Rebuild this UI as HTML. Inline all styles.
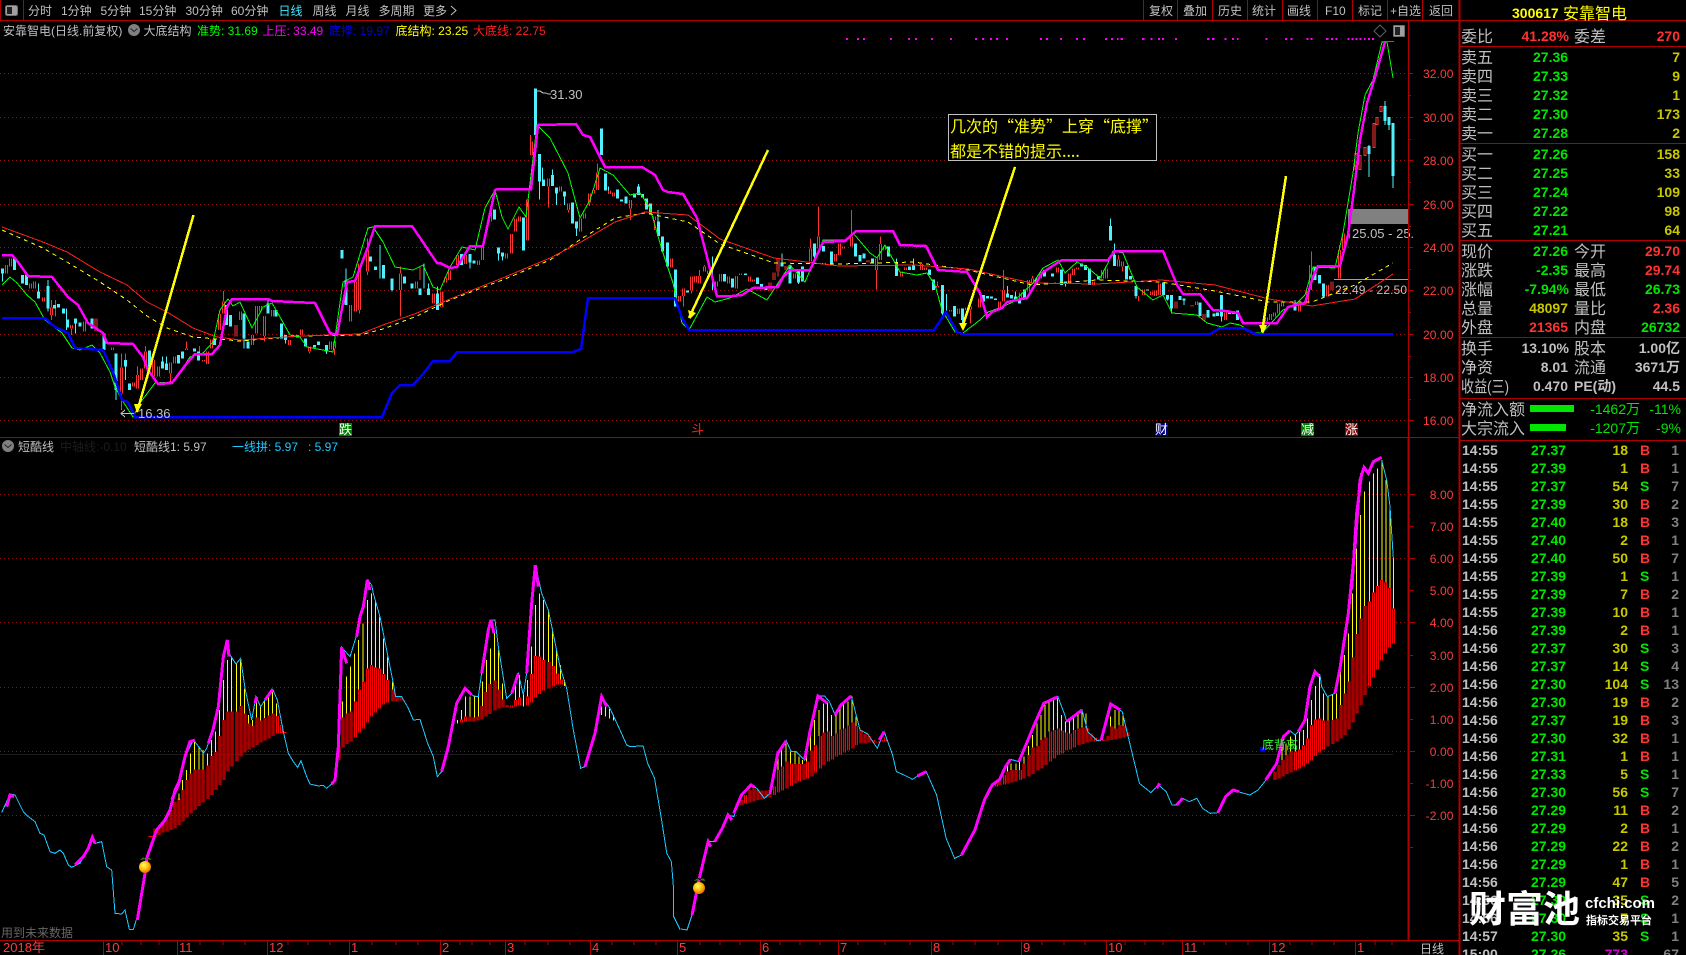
<!DOCTYPE html>
<html><head><meta charset="utf-8"><title>安靠智电</title>
<style>
html,body{margin:0;padding:0;background:#000;width:1686px;height:955px;overflow:hidden}
svg{display:block;position:absolute;left:0;top:0}
text{font-family:"Liberation Sans","WenQuanYi Zen Hei","Noto Sans CJK SC",sans-serif;font-size:12px;fill:#c0c0c0}
path,polyline,line{vector-effect:non-scaling-stroke;fill:none}
.cr{shape-rendering:crispEdges}
.l{font-size:16px}
.n{font-size:14px;font-weight:bold}
.e{text-anchor:end}
.a{font-size:12px;fill:#ff3c3c;text-anchor:end;letter-spacing:.1px}
.G{fill:#00e600}.Y{fill:#c8c800}.R{fill:#ff3232}.D{fill:#808080}.M{fill:#d000d0}
.note{font-family:"WenQuanYi Zen Hei","Noto Sans CJK SC",sans-serif;font-size:16px;fill:#ffff00}
</style></head><body>
<svg width="1686" height="955" viewBox="0 0 1686 955" xmlns="http://www.w3.org/2000/svg">
<defs>
<radialGradient id="fr" cx=".4" cy=".35" r=".7"><stop offset="0" stop-color="#ffff60"/><stop offset=".6" stop-color="#ffb000"/><stop offset="1" stop-color="#d86000"/></radialGradient>
<path id="r7" d="M20 135V160M32 115V140M92 190V205M104 185V205M130 232V245M154 262V285M214 315V325M254 305V335M288 295V335M338 383V390M364 442V520M400 487V500M412 465V505M424 445V480M436 395V445M460 420V470M476 440V470M512 428V460M524 410V430M560 385V390M610 420V425M622 395V432M634 358V385M658 282V330M670 245V280M708 315V350M722 275V300M758 345V375M770 258V340M782 258V275M794 288V348M818 270V290M868 360V375M904 328V345M928 380V395M992 365V388M1004 365V385M1052 255V305M1066 185V275M1078 130V270M1102 90V155M1202 160V210M1250 185V205M1300 220V250M1326 215V262"/>
<path id="r9" d="M4 635V680M16 592V608M28 572V600M52 525V555M76 525V552M116 542V555M128 498V540M152 395V425M200 520V535M214 462V520M226 415V455M238 410V425M262 358V482M274 185V225M326 295V320M362 320V335M386 370V390M422 415V455M434 400V415M448 340V368M460 330V340M472 278V330M508 332V342M520 338V350M572 360V385M644 410V420M694 535V562M718 648V665M730 625V648M754 590V632M766 588V608M778 588V610M794 560V575M806 572V582M830 605V620M842 582V605M866 590V610M890 588V625M902 580V585M928 590V605M940 598V605M990 608V635M1002 578V600M1014 535V575M1038 558V570M1063 580V595M1112 505V545M1136 470V505M1187 522V545M1199 490V525M1211 500V505M1235 470V500M1284 540V548M1310 535V570M1322 492V540M1334 500V510"/>
<path id="r10" d="M4 305V320M16 292V300M64 282V300M76 292V300M112 348V352M152 420V425M176 415V432M200 412V420M212 410V418M238 385V412M298 395V418M310 360V395M362 368V385M386 330V365M398 325V340M422 308V325M472 292V308M508 310V340M520 295V315M532 292V298M580 335V345M608 300V325M620 295V325M656 268V290M668 275V290M730 358V375M755 365V375M766 362V378M778 340V375M828 395V415M876 405V410M890 395V405M912 432V452M976 428V450M1100 442V455M1112 432V450M1124 428V440M1136 400V430M1148 398V410M1198 402V425M1222 355V400M1232 285V345M1282 345V380M1296 335V362M1318 240V325M1330 190V240M1345 190V205"/>
<path id="b11" d="M142 715V795M154 688V785M166 660V772M178 640V760M190 628V750M202 628V738M214 628V728M230 616V717M242 588V705M254 576V690M266 528V675M278 480V660M290 455V635M302 455V620M316 455V605M328 438V590M340 460V578M352 490V568M364 498V562M376 472V555M388 482V548M400 474V542M412 466V535M424 460V528M438 468V520M450 495V518M622 560V600M634 472V562M646 460V552M658 455V545M672 424V532M684 388V518M696 366V505M708 325V488M720 315V470M732 322V458M744 325V445M756 342V434M768 360V428M784 388V425M796 410V424M808 410V422M990 478V488M1002 470V485M1016 470V484M1028 472V484M1040 470V482M1052 438V478M1064 396V470M1076 372V462M1090 362V452M1102 388V445M1114 418V443M1126 435V442M1140 436V442M1152 420V440M1164 412V436M1188 410V436M1200 342V428M1212 288V412M1224 290V402M1236 300V392M1252 306V386M1266 318V380M1278 340V374M1290 358V374"/>
<path id="b6" d="M460 145V170M472 140V165M484 125V158M496 115V155M508 90V150M520 65V145"/>
<path id="b12" d="M250 430V438M262 420V435M272 405V430M283 390V428M294 385V425M304 388V420M315 392V418M325 392V412M336 390V412M347 380V405M358 330V398M368 320V392M380 305V385M392 310V378M403 312V370M413 312V365M424 312V360M434 305V355M445 272V350M455 255V338M467 228V325M477 218V315M488 215V305M499 228V298M510 220V290M520 208V285M531 205V278M541 196V272M552 188V265M562 198V255M573 210V250M584 222V250M595 228V248M606 240V248M616 245V248M627 240V245M637 232V245M927 370V380M937 365V375M948 345V373M958 335V370M968 330V368M979 330V365M990 330V360M1000 310V355M1013 285V350M1023 262V342M1036 258V332M1047 240V325M1057 232V315M1068 215V305M1079 210V295M1090 205V285M1100 212V280M1111 218V272M1121 220V268M1132 210V262M1143 205V255M1153 202V252M1164 202V248M1175 220V245M1186 232V245M1197 238V245M1208 238V243M1219 228V242M1229 200V240M1240 205V238M1250 195V235M1261 198V232M1271 218V228"/>
<path id="b8" d="M160 1025V1050M172 1005V1045M184 990V1040M196 975V1032M208 965V1028M222 965V1022M234 958V1015M246 945V1010M258 925V1000M270 885V992M282 868V978M294 865V968M306 872V958M320 872V950M334 870V942M346 865V935M358 825V925M370 790V915M382 755V898M394 682V878M406 612V850M418 565V825M430 528V795M444 515V770M456 488V742M468 468V718M480 450V692M492 458V670M504 474V652M516 535V640"/>
</defs>

<!-- grid upper -->
<g class="cr" stroke="#a01010" stroke-width="1" stroke-dasharray="1 3">
<line x1="0" y1="73.5" x2="1408" y2="73.5"/><line x1="0" y1="117.5" x2="1408" y2="117.5"/><line x1="0" y1="160.5" x2="1408" y2="160.5"/><line x1="0" y1="204.5" x2="1408" y2="204.5"/><line x1="0" y1="247.5" x2="1408" y2="247.5"/><line x1="0" y1="290.5" x2="1408" y2="290.5"/><line x1="0" y1="334.5" x2="1408" y2="334.5"/><line x1="0" y1="377.5" x2="1408" y2="377.5"/><line x1="0" y1="420.5" x2="1408" y2="420.5"/>
</g>
<g class="cr" stroke="#901010" stroke-width="1" stroke-dasharray="1 3">
<line x1="0" y1="494.5" x2="1408" y2="494.5"/><line x1="0" y1="558.5" x2="1408" y2="558.5"/><line x1="0" y1="622.5" x2="1408" y2="622.5"/><line x1="0" y1="687.5" x2="1408" y2="687.5"/><line x1="0" y1="751.5" x2="1408" y2="751.5"/><line x1="0" y1="815.5" x2="1408" y2="815.5"/>
</g>
<line x1="0" y1="754.5" x2="1393" y2="754.5" stroke="#1c1c1c" class="cr"/>

<!-- gray price zone -->
<rect x="1348" y="209" width="60" height="15" fill="#808080"/>
<line x1="1334" y1="279.5" x2="1408" y2="279.5" stroke="#a0a0a0" class="cr"/>
<text x="1352" y="238" style="font-size:13px;fill:#c0c0c0">25.05 - 25.</text>
<text x="1335" y="294" style="font-size:12px;fill:#c0c0c0" textLength="72">22.49 - 22.50</text>

<!-- candles -->
<g class="cr">
<g transform="translate(0 220) scale(.33333)">
<path stroke="#ff3232" stroke-width="1" d="M154 240V300M214 325V345M166 240V290M364 400V570M376 400V420M412 465V440M436 378V395M512 460V490M560 365V385M598 378V395M670 213V245M794 348V365M1202 140V290M1102 55V165M1078 270V280M1260 140V180M1004 385V405M928 395V400"/>
<path stroke="#50f0ff" stroke-width="1" d="M144 180V275M200 265V330M376 440V480M348 510V540M500 410V430M488 410V425M1038 145V180M1140 75V175M1176 210V215M1272 130V205M1285 190V225M1312 200V270M732 300V385M856 345V370M980 395V402M804 240V250M226 310V340M116 190V215M8 160V185"/>
<path stroke="#50f0ff" stroke-width="3" d="M8 145V160M44 115V150M68 165V190M80 165V195M116 215V235M144 198V265M164 255V265M176 252V262M190 265V280M202 298V322M226 295V310M240 308V320M276 295V325M312 340V390M348 400V510M376 420V440M388 490V510M448 392V440M488 425V445M500 430V450M536 405V430M548 395V415M584 385V395M596 395V422M644 355V375M680 255V315M692 285V320M732 280V355M744 365V385M804 250V280M828 270V290M844 310V355M856 345V360M892 345V352M916 355V380M944 375V382M956 365V375M980 375V395M1026 90V115M1038 180V255M1112 110V125M1126 140V150M1150 135V175M1176 175V210M1214 170V190M1236 190V205M1260 205V225M1285 205V225M1312 220V270"/>
<use href="#r7" stroke="#ff3232" stroke-width="3"/><use href="#r7" stroke="#000" stroke-width="1"/>
</g>
<g transform="translate(440 80) scale(.33333)">
<path stroke="#ff3232" stroke-width="1" d="M1136 380V470M1235 390V470M1310 570V628M326 318V382M572 385V420M730 648V680M754 632V640M272 165V185M386 390V398M472 250V278M794 555V560M778 570V588M448 368V378M1322 470V492M1014 575V590M1112 475V505M644 420V450"/>
<path stroke="#50f0ff" stroke-width="1" d="M298 305V358M350 340V375M410 445V468M818 530V630M654 390V425M1026 520V548M176 520V542M90 548V565M188 530V542M308 262V298M338 268V285M374 350V375M506 320V332M596 312V320M1370 535V548M1124 530V545M1076 608V612"/>
<path stroke="#50f0ff" stroke-width="3" d="M64 522V555M90 522V548M102 542V550M176 502V520M188 518V530M164 388V418M250 412V512M286 25V165M298 222V305M310 298V318M338 285V318M350 322V340M374 335V350M398 368V430M410 425V445M484 145V225M496 280V332M532 328V355M544 358V365M558 350V370M584 340V352M596 320V345M608 342V352M620 355V388M632 370V400M656 425V468M668 470V515M682 488V560M706 568V680M742 632V638M854 582V605M878 595V622M916 580V585M952 592V612M964 612V625M978 620V630M1026 548V560M1050 555V610M1076 570V608M1088 560V605M1124 490V530M1150 498V515M1174 515V555M1247 490V530M1260 525V545M1272 520V535M1297 535V548M1345 500V530M1370 548V588"/>
<use href="#r9" stroke="#ff3232" stroke-width="3"/><use href="#r9" stroke="#000" stroke-width="1"/>
</g>
<g transform="translate(900 170) scale(.33333)">
<path stroke="#ff3232" stroke-width="1" d="M310 300V360M1234 245V285M1234 345V360M112 335V348M212 400V460M656 255V268M668 290V305M716 378V393M1100 455V460M398 318V325M1318 225V240"/>
<path stroke="#50f0ff" stroke-width="1" d="M632 145V168M644 220V255M128 430V435M140 372V430M188 450V460M40 265V285M322 348V370M346 365V380M814 415V430M1270 380V382M1185 390V398M496 342V350M802 388V392M964 440V455M708 378V385M852 392V405"/>
<path stroke="#50f0ff" stroke-width="3" d="M28 290V300M40 285V300M88 298V315M100 328V360M128 345V430M164 408V440M188 415V450M250 375V395M262 378V385M274 380V385M286 385V390M322 370V382M334 375V385M346 380V395M358 385V400M374 358V385M410 325V345M434 300V320M458 310V320M484 298V345M496 335V342M544 280V290M556 285V300M568 295V345M596 318V328M632 168V212M644 255V288M680 288V328M692 318V328M708 348V378M742 358V362M790 338V375M802 375V388M814 375V415M840 378V390M852 385V392M900 398V438M924 420V442M942 430V440M952 428V438M964 375V440M988 422V432M1000 425V432M1012 422V450M1185 398V422M1245 290V330M1258 315V340M1270 340V380"/>
<use href="#r10" stroke="#ff3232" stroke-width="3"/><use href="#r10" stroke="#000" stroke-width="1"/>
</g>
<path stroke="#ff3232" stroke-width="3" d="M1356 153V170M1360 155V170M1365 147V156M1374 123V148M1377 117V125M1381 106V112"/>
<path stroke="#000" stroke-width="1" d="M1356 154V169M1360 156V169M1365 148V155M1374 124V147M1377 118V124M1381 107V111"/>
<path stroke="#50f0ff" stroke-width="1" d="M1369 145V177M1385 101V125M1389 117V130M1393 123V188"/>
<path stroke="#50f0ff" stroke-width="3" d="M1369 146V154M1385 106V121M1389 117V125M1393 123V176"/>
</g>

<!-- MA lines -->
<polyline class="cr" stroke="#ffff00" stroke-width="1" stroke-dasharray="4 4" points="2,230 43,248 67,262 100,282 127,300 147,316 167,328 193,337 217,339 240,341 300,336 360,335 383,329 417,316 450,300 505,279 550,260 581,239 615,218 645,213 688,222 720,244 774,263 839,264 914,262 968,270 1032,285 1097,280 1161,282 1215,291 1269,302 1312,302 1355,285 1393,263"/>
<polyline class="cr" stroke="#ff2020" stroke-width="1" points="2,227 43,242 67,252 100,272 127,285 147,302 167,312 193,328 217,337 240,340 300,336 360,334 383,325 417,313 450,299 505,277 550,258 581,242 615,222 645,212 688,215 720,239 774,258 839,266 914,265 968,269 1032,283 1097,284 1161,280 1215,285 1269,299 1312,306 1355,299 1393,274"/>
<!-- green -->
<polyline class="cr" stroke="#00ff00" stroke-width="1" points="2,285 10,277 17,283 27,295 35,302 45,320 62,333 72,348 80,350 92,345 100,353 110,372 115,387 122,400 133,417 140,403 155,383 173,382 190,357 203,353 213,342 220,310 228,299 233,306 240,302 252,328 263,307 272,303 280,317 290,335 300,337 307,347 333,352 338,317 343,282 353,277 368,228 373,227 383,242 395,267 413,270 423,265 433,287 440,290 450,267 462,247 475,250 485,208 495,190 502,217 508,229 519,207 526,217 537,125 550,138 568,173 580,218 590,200 600,168 613,175 630,195 640,193 650,208 662,250 673,283 682,323 689,330 707,297 715,302 730,298 747,289 767,300 790,265 805,282 823,240 845,240 853,233 870,253 877,258 885,245 900,272 917,275 927,273 935,285 942,310 955,332 963,333 980,320 988,312 1002,307 1013,302 1033,283 1043,268 1058,260 1065,273 1077,262 1087,267 1100,278 1108,263 1113,251 1123,253 1137,287 1153,300 1163,295 1172,313 1197,315 1207,323 1222,327 1230,323 1240,325 1253,333 1262,333 1283,310 1297,303 1305,295 1313,267 1335,268 1343,233 1353,173 1358,133 1365,95 1373,80 1382,42 1387,42 1393,78"/>
<!-- blue -->
<polyline class="cr" stroke="#0000ff" stroke-width="2.5" points="2,318 45,318 55,327 68,333 75,348 103,350 113,372 122,400 128,402 135,417 382,417 392,393 400,385 413,385 423,374 433,361 450,361 457,352 573,352 581,349 588,298 675,298 682,318 689,330 934,330 946,312 957,332 963,334 1210,334 1220,328 1243,328 1255,334 1393,334"/>
<!-- magenta -->
<polyline class="cr" stroke="#ff00ff" stroke-width="2.5" points="2,255 12,255 18,262 28,276 52,277 68,297 78,305 88,323 103,333 107,343 133,344 143,357 148,370 158,384 172,383 187,363 195,354 212,354 220,345 227,307 232,299 268,299 272,301 315,303 330,333 337,335 347,282 355,281 368,247 375,226 412,226 437,263 440,263 450,268 457,267 470,246 483,246 495,190 498,189 531,189 538,125 576,124 583,135 590,137 605,167 642,167 655,175 663,190 668,192 683,194 697,218 707,257 717,296 732,296 742,295 753,288 778,287 783,277 790,270 810,270 823,242 845,241 856,231 893,231 900,245 926,246 938,270 967,272 980,293 987,317 992,312 1002,308 1007,302 1027,298 1042,273 1057,263 1062,260 1108,260 1115,251 1163,251 1177,285 1183,294 1200,294 1213,310 1225,311 1238,313 1243,323 1277,323 1288,307 1305,303 1313,277 1318,266 1340,266 1348,235 1354,190 1360,140 1367,103 1375,77 1385,42"/>
<line class="cr" x1="1382" y1="41.5" x2="1394" y2="41.5" stroke="#ff00ff"/>

<!-- yellow arrows -->
<g class="cr" stroke="#ffff00" stroke-width="2.5">
<path d="M137 412L193.5 215"/>
<path d="M689 318L768 150"/>
<path d="M962 328L1015 167"/>
<path d="M1262 332L1286 176"/>
</g>
<path d="M134 404h8l-5 9z" style="fill:#ffff00"/>
<path d="M688 310l8 3-6 6z" style="fill:#ffff00"/>
<path d="M959 323h8l-4 8z" style="fill:#ffff00"/>
<path d="M1259 325h8l-4 9z" style="fill:#ffff00"/>

<!-- annotation box -->
<rect x="948.5" y="114.5" width="208" height="46" fill="#000" stroke="#c0c0c0" class="cr"/>
<text x="950" y="132" class="note">几次的“准势”上穿“底撑”</text>
<text x="950" y="157" class="note">都是不错的提示....</text>

<!-- magenta top dots -->
<g class="cr" stroke="#ff00ff" stroke-width="2">
<path d="M846 39h2M857 39h2M863 39h2M890 39h2M908 39h2M915 39h2M931 39h2M950 39h2M975 39h2M982 39h2M990 39h2M996 39h2M1006 39h2M1040 39h2M1046 39h2M1060 39h2M1076 39h2M1083 39h2"/>
<g transform="translate(1100 0) scale(.37369 1)"><path d="M13 39h6M30 39h5M45 39h5M55 39h6M113 39h6M135 39h6M155 39h5M166 39h5M201 39h5M287 39h6M300 39h6M333 39h5M353 39h5M366 39h5M443 39h5M495 39h6M510 39h5M552 39h6M563 39h5M605 39h6M618 39h6M630 39h5M662 39h5M673 39h5M684 39h5M695 39h5M706 39h5M717 39h5M728 39h5"/></g>
</g>

<!-- lower chart -->
<g class="cr">
<g transform="translate(130 560) scale(.33333)">
<g transform="translate(4.5 0)"><use href="#b11" stroke="#ff0000" stroke-width="3"/><use href="#b11" stroke="#4a0000" stroke-width="1"/></g>
<path stroke="#ffff00" stroke-width="1" d="M147 700V720M158 660V690M170 630V660M182 580V640M194 545V628M207 560V628M219 570V628M232 580V616M244 540V588M256 515V576M268 450V528M281 360V480M293 300V455M305 290V455M319 310V455M332 300V438M344 385V460M356 465V490M368 480V498M380 420V472M392 440V482M404 420V474M416 405V466M428 395V460M440 430V468M637 425V472M650 350V460M662 320V455M674 280V424M686 240V388M699 190V366M712 120V325M724 100V315M737 125V322M749 170V325M761 235V342M773 290V360M788 365V388M983 480V490M995 450V478M1007 410V470M1020 410V470M1033 408V472M1045 410V470M1057 365V438M1069 300V396M1081 265V372M1094 210V362M1106 270V388M1118 370V418M1157 375V420M1168 345V412M1180 400V440M1192 360V410M1204 260V342M1217 135V288M1229 100V290M1241 120V300M1256 150V306M1268 205V318M1280 265V340M1292 315V358M1304 360V378M1415 440V465M1427 440V470M1439 445V475M1451 465V482"/>
<path stroke="#ff0000" stroke-width="1" d="M450 517H470"/>
<polyline stroke="#1ec8ff" stroke-width="1" points="128,715 150,660 170,580 190,540 210,565 220,580 230,565 250,505 265,440 280,290 292,240 300,285 318,312 332,295 345,385 365,480 378,410 392,440 405,420 428,388 442,420 460,515 475,580 490,605 503,622 513,602 530,650 540,672 565,678 580,676 590,685 605,672 615,660 625,560 635,262 660,290 680,225 690,170 700,140 712,60 725,75 730,100 750,170 790,370 797,410 815,410 835,445 850,480 870,478 893,550 910,590 922,650 935,635 955,560 980,430 1005,385 1030,408 1045,410 1055,340 1075,210 1083,180 1095,180 1105,260 1130,415 1145,400 1165,340 1180,405 1190,340 1205,130 1216,15 1235,100 1255,150 1290,320 1310,385 1330,510 1352,625 1365,620 1395,520 1415,410 1440,445 1470,510 1490,555 1500,560 1530,558"/>
<g stroke="#ff00ff" stroke-width="3">
<polyline points="125,720 145,675 165,590 180,545 195,540"/>
<polyline points="235,550 250,505 265,440 280,290 292,240 297,290"/>
<polyline points="375,430 380,410"/><polyline points="405,420 428,388"/>
<polyline points="605,672 615,660 625,560 635,262 650,310"/>
<polyline points="680,230 690,170 700,140 712,60 720,90"/>
<polyline points="935,635 955,560 980,430 1005,385 1025,405"/>
<polyline points="1055,340 1075,210 1083,180 1092,220"/>
<polyline points="1145,400 1165,340"/>
<polyline points="1190,340 1205,130 1216,15 1225,80"/>
<polyline points="1365,620 1395,520 1415,410 1430,440"/>
</g>
</g>
<g transform="translate(0 780) scale(.33333)">
<g transform="translate(4.5 0)"><use href="#b6" stroke="#ff0000" stroke-width="3"/><use href="#b6" stroke="#4a0000" stroke-width="1"/></g>
<path stroke="#ff0000" stroke-width="1" d="M445 170H470"/>
<polyline stroke="#1ec8ff" stroke-width="1" points="5,98 30,42 45,45 70,95 85,110 105,125 120,160 132,165 150,215 165,220 180,210 190,220 205,255 215,262 240,250 265,205 277,172 285,190 305,185 320,260 335,270 345,400 365,402 375,390 388,448 400,448 412,410"/>
<g stroke="#ff00ff" stroke-width="3">
<polyline points="412,420 435,280 440,235 470,150 495,120 510,90 525,30 540,0"/>
<polyline points="20,80 30,45 42,50"/><polyline points="225,255 250,230 265,205 277,172 285,190"/>
</g>
</g>
<g transform="translate(640 660) scale(.38270 .33333)">
<g transform="translate(4 0)"><use href="#b12" stroke="#ff0000" stroke-width="3"/><use href="#b12" stroke="#4a0000" stroke-width="1"/></g>
<path stroke="#ffff00" stroke-width="1" d="M360 280V330M370 265V320M382 245V305M393 275V310M405 275V312M415 290V312M424 300V312M435 290V305M446 210V272M456 180V255M468 150V228M479 130V218M490 125V215M500 165V228M512 165V220M522 140V208M532 130V205M543 125V196M554 110V188M564 170V198M575 205V210M960 315V335M970 310V330M982 310V330M992 305V330M1003 290V310M1015 258V285M1025 225V262M1038 190V258M1048 165V240M1058 135V232M1069 125V215M1080 120V210M1091 112V205M1102 165V212M1112 185V218M1122 180V220M1133 170V210M1144 160V205M1155 150V202M1166 160V202M1230 170V200M1241 150V205M1252 150V195M1262 160V198"/>
<polyline stroke="#1ec8ff" stroke-width="1" points="0,258 8,258 20,310 38,355 55,470 70,580 82,605 88,690 88,770 105,809"/>
<polyline stroke="#1ec8ff" stroke-width="1" points="178,545 195,545 215,505 230,465 245,470 265,405 290,375 305,385 325,415 340,400 360,280 382,242 395,275 408,275 430,300 445,210 465,108 482,108 495,125 510,165 525,135 552,108 575,210 595,222 620,265 638,215 660,285 670,335 690,345 712,358 730,345 748,335 775,405 800,535 822,595 840,585 875,510 900,420 920,375 940,358 955,320 968,298 990,305 1030,195 1055,130 1092,110 1110,165 1115,185 1155,150 1170,215 1195,242 1205,240 1230,132 1260,155 1285,275 1305,370 1335,398 1355,375 1375,395 1390,435 1402,435 1418,415 1435,425 1455,415 1470,445 1490,460 1510,458 1530,410 1550,390 1565,395"/>
<g stroke="#ff00ff" stroke-width="3">
<polyline points="155,655 178,545 185,560"/><polyline points="195,545 215,505 230,465 240,480"/><polyline points="245,460 265,405 290,375 300,382"/>
<polyline points="340,400 360,280 382,242"/><polyline points="430,300 445,210 465,108 490,130"/><polyline points="510,165 525,135 552,108"/>
<polyline points="625,240 638,215"/><polyline points="725,348 748,335"/>
<polyline points="840,585 875,510 900,420 920,375 940,358 955,320 968,298"/><polyline points="990,305 1030,195 1055,130 1092,110"/><polyline points="1115,185 1155,150"/>
<polyline points="1205,240 1230,132 1255,150"/><polyline points="1350,385 1358,370"/><polyline points="1402,435 1418,415"/><polyline points="1510,458 1530,410 1550,390 1565,395"/>
</g>
</g>
<polyline stroke="#1ec8ff" stroke-width="1" points="681,929 687,930 692,915"/>
<polyline stroke="#ff00ff" stroke-width="3" points="692,915 699,880"/>
<polyline stroke="#1ec8ff" stroke-width="1" points="1239,792 1250,795 1258,790 1266,780"/>
<g transform="translate(1220 430) scale(.33333)">
<g transform="translate(4.5 0)"><use href="#b8" stroke="#ff0000" stroke-width="3"/><use href="#b8" stroke="#4a0000" stroke-width="1"/></g>
<path stroke="#ffff00" stroke-width="1" d="M186 940V990M198 940V975M212 920V965M226 915V965M238 905V958M250 900V945M262 865V925M274 810V885M286 768V868M298 738V865M310 790V872M324 800V872M338 795V870M350 790V865M362 715V825M374 675V790M386 610V755M398 490V682M410 355V612M422 255V565M434 185V528M448 155V515M460 130V488M472 115V468M486 90V450M498 150V458M510 230V474M520 385V535"/>
<polyline stroke="#1ec8ff" stroke-width="1" points="285,725 300,735 305,770 322,800 345,790"/><polyline stroke="#1ec8ff" stroke-width="1" points="210,902 225,915 235,905"/>
<polyline stroke="#1ec8ff" stroke-width="1" points="485,90 500,150 510,230 520,385"/>
<g stroke="#ff00ff" stroke-width="3">
<polyline points="137,1050 170,1000 190,920 210,902"/>
<polyline points="235,905 255,870 270,770 285,725 298,740"/>
<polyline points="345,790 360,715 385,550 405,350 420,150 432,112 445,130 460,95 485,82"/>
<polyline points="395,480 410,250 425,130"/>
</g>
</g>
</g>

<!-- fruits -->
<g>
<path d="M140 860q5-5 5 0q5-5 6 0l-5-1z" style="fill:#3c7a10"/><circle cx="145" cy="867" r="6" fill="url(#fr)"/>
<path d="M694 881q5-5 5 0q5-5 6 0l-5-1z" style="fill:#3c7a10"/><circle cx="699" cy="888" r="6" fill="url(#fr)"/>
</g>

<!-- lower labels -->
<rect x="1260" y="747" width="5" height="5" fill="#0000e0"/>
<text x="1262" y="749" style="font-size:12px;fill:#33ff33">底背离</text>
<text x="138" y="418" style="font-size:13px;fill:#c0c0c0">16.36</text>
<path d="M121 413.5H134M125 410L121 413.5L125 417" stroke="#c0c0c0" class="cr"/>
<text x="550" y="99" style="font-size:13px;fill:#c0c0c0">31.30</text>
<path d="M537 91h3l3 2h3l2 1h3" stroke="#c0c0c0" class="cr"/>
<rect x="339" y="423" width="13" height="13" fill="#008000"/><text x="339" y="434" style="fill:#fff;font-size:13px">跌</text>
<text x="691" y="434" style="fill:#ff2020;font-size:13px">斗</text>
<rect x="1155" y="423" width="13" height="13" fill="#000080"/><text x="1155" y="434" style="fill:#fff;font-size:13px">财</text>
<rect x="1301" y="423" width="13" height="13" fill="#008000"/><text x="1301" y="434" style="fill:#fff;font-size:13px">减</text>
<rect x="1345" y="423" width="13" height="13" fill="#800000"/><text x="1345" y="434" style="fill:#fff;font-size:13px">涨</text>

<!-- structure lines -->
<g class="cr" stroke="#b00000" stroke-width="1">
<line x1="0" y1="20.5" x2="1686" y2="20.5"/>
<line x1="0" y1="437.5" x2="1459" y2="437.5"/>
<line x1="0" y1="940.5" x2="1459" y2="940.5"/>
<line x1="1408.5" y1="20" x2="1408.5" y2="437"/>
<line x1="1408.5" y1="437" x2="1408.5" y2="940" stroke-width="2"/>
<line x1="1459.5" y1="0" x2="1459.5" y2="955" stroke-width="2"/>
<line x1="0.5" y1="0" x2="0.5" y2="20"/><line x1="23.5" y1="0" x2="23.5" y2="20"/>
<line x1="1143.5" y1="0" x2="1143.5" y2="20"/><line x1="1177.5" y1="0" x2="1177.5" y2="20"/><line x1="1212.5" y1="0" x2="1212.5" y2="20"/><line x1="1247.5" y1="0" x2="1247.5" y2="20"/><line x1="1282.5" y1="0" x2="1282.5" y2="20"/><line x1="1317.5" y1="0" x2="1317.5" y2="20"/><line x1="1352.5" y1="0" x2="1352.5" y2="20"/><line x1="1387.5" y1="0" x2="1387.5" y2="20"/><line x1="1422.5" y1="0" x2="1422.5" y2="20"/>
<line x1="1459" y1="46.5" x2="1686" y2="46.5"/><line x1="1459" y1="143.5" x2="1686" y2="143.5"/><line x1="1459" y1="240.5" x2="1686" y2="240.5"/><line x1="1459" y1="337.5" x2="1686" y2="337.5"/><line x1="1459" y1="398.5" x2="1686" y2="398.5"/><line x1="1459" y1="440.5" x2="1686" y2="440.5"/>
<!-- axis ticks -->
<path d="M1408 73.5h5M1408 95.5h3M1408 117.5h5M1408 139.5h3M1408 160.5h5M1408 182.5h3M1408 204.5h5M1408 226.5h3M1408 247.5h5M1408 269.5h3M1408 290.5h5M1408 312.5h3M1408 334.5h5M1408 356.5h3M1408 377.5h5M1408 399.5h3M1408 420.5h5M1410 494.5h5M1410 526.5h3M1410 558.5h5M1410 590.5h3M1410 622.5h5M1410 655.5h3M1410 687.5h5M1410 719.5h3M1410 751.5h5M1410 783.5h3M1410 815.5h5M1410 847.5h3"/>
<path d="M103.5 940V955M177.5 940V955M267.5 940V955M349.5 940V955M440.5 940V955M505.5 940V955M590.5 940V955M677.5 940V955M760.5 940V955M838.5 940V955M931.5 940V955M1021.5 940V955M1106.5 940V955M1182.5 940V955M1269.5 940V955M1355.5 940V955"/>
<path d="M122 940v5M141 940v5M159 940v5M200 940v5M223 940v5M245 940v5M288 940v5M308 940v5M330 940v5M372 940v5M396 940v5M418 940v5M460 940v5M472 940v5M490 940v5M525 940v5M548 940v5M570 940v5M612 940v5M634 940v5M656 940v5M700 940v5M720 940v5M740 940v5M780 940v5M800 940v5M820 940v5M858 940v5M885 940v5M910 940v5M953 940v5M975 940v5M998 940v5M1042 940v5M1064 940v5M1085 940v5M1125 940v5M1145 940v5M1163 940v5M1204 940v5M1226 940v5M1248 940v5M1290 940v5M1312 940v5M1334 940v5M1375 940v5M1392 940v5"/>
</g>

<!-- toolbar -->
<rect x="5.5" y="5.5" width="12" height="10" rx="2" fill="#a0a0a0" stroke="#707070" class="cr"/><rect x="7" y="7" width="5" height="7" fill="#202020"/>
<text x="28" y="15">分时</text><text x="61" y="15">1分钟</text><text x="100.5" y="15">5分钟</text><text x="139" y="15">15分钟</text><text x="185.5" y="15">30分钟</text><text x="231" y="15">60分钟</text>
<text x="278.5" y="15" style="fill:#40e8ff">日线</text><text x="312.5" y="15">周线</text><text x="345.5" y="15">月线</text><text x="378.5" y="15">多周期</text><text x="423" y="15">更多</text>
<path d="M451 6l5 4.5l-5 4.5" stroke="#c0c0c0"/>
<text x="1149" y="15">复权</text><text x="1183" y="15">叠加</text><text x="1218" y="15">历史</text><text x="1252" y="15">统计</text><text x="1287" y="15">画线</text><text x="1325" y="15">F10</text><text x="1358" y="15">标记</text><text x="1390" y="15">+自选</text><text x="1429" y="15">返回</text>

<!-- info line -->
<text x="3" y="35">安靠智电(日线.前复权)</text>
<circle cx="134" cy="30" r="6" fill="#808080"/><path d="M130.5 28.5l3.5 3l3.5-3" stroke="#222"/>
<text x="143.5" y="35">大底结构</text>
<text x="197" y="35" style="fill:#00ff00">准势: 31.69</text>
<text x="262.5" y="35" style="fill:#ff00ff">上压: 33.49</text>
<text x="329" y="35" style="fill:#0000e0">底撑: 19.97</text>
<text x="395.5" y="35" style="fill:#ffff00">底结构: 23.25</text>
<text x="473" y="35" style="fill:#ff2020">大底线: 22.75</text>
<path d="M1380 25l6 6l-6 6l-6-6z" stroke="#606060"/>
<rect x="1393.5" y="25.5" width="11" height="11" rx="1" fill="#a0a0a0" stroke="#707070" class="cr"/><rect x="1395" y="27" width="5" height="8" fill="#222"/>

<circle cx="8" cy="446" r="6" fill="#808080"/><path d="M4.5 444.5l3.5 3l3.5-3" stroke="#222"/>
<text x="18" y="451">短酷线</text>
<text x="60" y="451" style="fill:#1c1c1c">中轴线:-0.10</text>
<text x="134" y="451">短酷线1: 5.97</text>
<text x="232" y="451" style="fill:#1ec8ff">一线拼: 5.97</text>
<text x="308" y="451" style="fill:#1ec8ff">: 5.97</text>
<text x="1" y="937" style="fill:#666">用到未来数据</text>

<!-- axis labels -->
<text class="a" x="1453.5" y="78">32.00</text><text class="a" x="1453.5" y="122">30.00</text><text class="a" x="1453.5" y="165">28.00</text><text class="a" x="1453.5" y="209">26.00</text><text class="a" x="1453.5" y="252">24.00</text><text class="a" x="1453.5" y="295">22.00</text><text class="a" x="1453.5" y="339">20.00</text><text class="a" x="1453.5" y="382">18.00</text><text class="a" x="1453.5" y="425">16.00</text>
<text class="a" x="1453.5" y="499">8.00</text><text class="a" x="1453.5" y="531">7.00</text><text class="a" x="1453.5" y="563">6.00</text><text class="a" x="1453.5" y="595">5.00</text><text class="a" x="1453.5" y="627">4.00</text><text class="a" x="1453.5" y="660">3.00</text><text class="a" x="1453.5" y="692">2.00</text><text class="a" x="1453.5" y="724">1.00</text><text class="a" x="1453.5" y="756">0.00</text><text class="a" x="1453.5" y="788">-1.00</text><text class="a" x="1453.5" y="820">-2.00</text>
<g style="fill:#ff3c3c">
<text x="3" y="952" style="fill:#ff3c3c;font-size:13px">2018年</text>
<text x="105" y="952" style="fill:#ff3c3c;font-size:13px">10</text><text x="179" y="952" style="fill:#ff3c3c;font-size:13px">11</text><text x="269" y="952" style="fill:#ff3c3c;font-size:13px">12</text><text x="351" y="952" style="fill:#ff3c3c;font-size:13px">1</text><text x="442" y="952" style="fill:#ff3c3c;font-size:13px">2</text><text x="507" y="952" style="fill:#ff3c3c;font-size:13px">3</text><text x="592" y="952" style="fill:#ff3c3c;font-size:13px">4</text><text x="679" y="952" style="fill:#ff3c3c;font-size:13px">5</text><text x="762" y="952" style="fill:#ff3c3c;font-size:13px">6</text><text x="840" y="952" style="fill:#ff3c3c;font-size:13px">7</text><text x="933" y="952" style="fill:#ff3c3c;font-size:13px">8</text><text x="1023" y="952" style="fill:#ff3c3c;font-size:13px">9</text><text x="1108" y="952" style="fill:#ff3c3c;font-size:13px">10</text><text x="1184" y="952" style="fill:#ff3c3c;font-size:13px">11</text><text x="1271" y="952" style="fill:#ff3c3c;font-size:13px">12</text><text x="1357" y="952" style="fill:#ff3c3c;font-size:13px">1</text>
</g>
<text x="1420" y="953" style="fill:#c0c0c0">日线</text>

<!-- right panel -->
<text x="1512" y="18" class="n" style="fill:#ffff00">300617</text><text x="1563" y="19" class="l" style="fill:#ffff00">安靠智电</text>
<text x="1461" y="42" class="l">委比</text><text x="1569" y="41" class="n e R">41.28%</text><text x="1574" y="42" class="l">委差</text><text x="1680" y="41" class="n e R">270</text>

<text x="1461" y="63" class="l">卖五</text><text x="1533" y="62" class="n G">27.36</text><text x="1680" y="62" class="n e Y">7</text>
<text x="1461" y="82" class="l">卖四</text><text x="1533" y="81" class="n G">27.33</text><text x="1680" y="81" class="n e Y">9</text>
<text x="1461" y="101" class="l">卖三</text><text x="1533" y="100" class="n G">27.32</text><text x="1680" y="100" class="n e Y">1</text>
<text x="1461" y="120" class="l">卖二</text><text x="1533" y="119" class="n G">27.30</text><text x="1680" y="119" class="n e Y">173</text>
<text x="1461" y="139" class="l">卖一</text><text x="1533" y="138" class="n G">27.28</text><text x="1680" y="138" class="n e Y">2</text>
<text x="1461" y="160" class="l">买一</text><text x="1533" y="159" class="n G">27.26</text><text x="1680" y="159" class="n e Y">158</text>
<text x="1461" y="179" class="l">买二</text><text x="1533" y="178" class="n G">27.25</text><text x="1680" y="178" class="n e Y">33</text>
<text x="1461" y="198" class="l">买三</text><text x="1533" y="197" class="n G">27.24</text><text x="1680" y="197" class="n e Y">109</text>
<text x="1461" y="217" class="l">买四</text><text x="1533" y="216" class="n G">27.22</text><text x="1680" y="216" class="n e Y">98</text>
<text x="1461" y="236" class="l">买五</text><text x="1533" y="235" class="n G">27.21</text><text x="1680" y="235" class="n e Y">64</text>

<text x="1461" y="257" class="l">现价</text><text x="1568" y="256" class="n e G">27.26</text><text x="1574" y="257" class="l">今开</text><text x="1680" y="256" class="n e R">29.70</text>
<text x="1461" y="276" class="l">涨跌</text><text x="1568" y="275" class="n e G">-2.35</text><text x="1574" y="276" class="l">最高</text><text x="1680" y="275" class="n e R">29.74</text>
<text x="1461" y="295" class="l">涨幅</text><text x="1569" y="294" class="n e G">-7.94%</text><text x="1574" y="295" class="l">最低</text><text x="1680" y="294" class="n e G">26.73</text>
<text x="1461" y="314" class="l">总量</text><text x="1568" y="313" class="n e Y">48097</text><text x="1574" y="314" class="l">量比</text><text x="1680" y="313" class="n e R">2.36</text>
<text x="1461" y="333" class="l">外盘</text><text x="1568" y="332" class="n e R">21365</text><text x="1574" y="333" class="l">内盘</text><text x="1680" y="332" class="n e G">26732</text>

<text x="1461" y="354" class="l">换手</text><text x="1569" y="353" class="n e">13.10%</text><text x="1574" y="354" class="l">股本</text><text x="1680" y="353" class="n e">1.00亿</text>
<text x="1461" y="373" class="l">净资</text><text x="1568" y="372" class="n e">8.01</text><text x="1574" y="373" class="l">流通</text><text x="1680" y="372" class="n e">3671万</text>
<text x="1461" y="392" class="l" textLength="48" lengthAdjust="spacingAndGlyphs">收益(三)</text><text x="1568" y="391" class="n e">0.470</text><text x="1574" y="391" class="n">PE(动)</text><text x="1680" y="391" class="n e">44.5</text>

<text x="1461" y="415" class="l">净流入额</text><rect x="1530" y="405" width="44" height="7" fill="#00e600"/><text x="1640" y="414" class="n e G" style="font-weight:normal;font-size:14px">-1462万</text><text x="1681" y="414" class="n e G" style="font-weight:normal">-11%</text>
<text x="1461" y="434" class="l">大宗流入</text><rect x="1530" y="424" width="36" height="7" fill="#00e600"/><text x="1640" y="433" class="n e G" style="font-weight:normal;font-size:14px">-1207万</text><text x="1681" y="433" class="n e G" style="font-weight:normal">-9%</text>

<text x="1462" y="455" class="n">14:55</text><text x="1531" y="455" class="n G">27.37</text><text x="1628" y="455" class="n e Y">18</text><text x="1640" y="455" class="n R">B</text><text x="1679" y="455" class="n e D">1</text>
<text x="1462" y="473" class="n">14:55</text><text x="1531" y="473" class="n G">27.39</text><text x="1628" y="473" class="n e Y">1</text><text x="1640" y="473" class="n R">B</text><text x="1679" y="473" class="n e D">1</text>
<text x="1462" y="491" class="n">14:55</text><text x="1531" y="491" class="n G">27.37</text><text x="1628" y="491" class="n e Y">54</text><text x="1640" y="491" class="n G">S</text><text x="1679" y="491" class="n e D">7</text>
<text x="1462" y="509" class="n">14:55</text><text x="1531" y="509" class="n G">27.39</text><text x="1628" y="509" class="n e Y">30</text><text x="1640" y="509" class="n R">B</text><text x="1679" y="509" class="n e D">2</text>
<text x="1462" y="527" class="n">14:55</text><text x="1531" y="527" class="n G">27.40</text><text x="1628" y="527" class="n e Y">18</text><text x="1640" y="527" class="n R">B</text><text x="1679" y="527" class="n e D">3</text>
<text x="1462" y="545" class="n">14:55</text><text x="1531" y="545" class="n G">27.40</text><text x="1628" y="545" class="n e Y">2</text><text x="1640" y="545" class="n R">B</text><text x="1679" y="545" class="n e D">1</text>
<text x="1462" y="563" class="n">14:55</text><text x="1531" y="563" class="n G">27.40</text><text x="1628" y="563" class="n e Y">50</text><text x="1640" y="563" class="n R">B</text><text x="1679" y="563" class="n e D">7</text>
<text x="1462" y="581" class="n">14:55</text><text x="1531" y="581" class="n G">27.39</text><text x="1628" y="581" class="n e Y">1</text><text x="1640" y="581" class="n G">S</text><text x="1679" y="581" class="n e D">1</text>
<text x="1462" y="599" class="n">14:55</text><text x="1531" y="599" class="n G">27.39</text><text x="1628" y="599" class="n e Y">7</text><text x="1640" y="599" class="n R">B</text><text x="1679" y="599" class="n e D">2</text>
<text x="1462" y="617" class="n">14:55</text><text x="1531" y="617" class="n G">27.39</text><text x="1628" y="617" class="n e Y">10</text><text x="1640" y="617" class="n R">B</text><text x="1679" y="617" class="n e D">1</text>
<text x="1462" y="635" class="n">14:56</text><text x="1531" y="635" class="n G">27.39</text><text x="1628" y="635" class="n e Y">2</text><text x="1640" y="635" class="n R">B</text><text x="1679" y="635" class="n e D">1</text>
<text x="1462" y="653" class="n">14:56</text><text x="1531" y="653" class="n G">27.37</text><text x="1628" y="653" class="n e Y">30</text><text x="1640" y="653" class="n G">S</text><text x="1679" y="653" class="n e D">3</text>
<text x="1462" y="671" class="n">14:56</text><text x="1531" y="671" class="n G">27.37</text><text x="1628" y="671" class="n e Y">14</text><text x="1640" y="671" class="n G">S</text><text x="1679" y="671" class="n e D">4</text>
<text x="1462" y="689" class="n">14:56</text><text x="1531" y="689" class="n G">27.30</text><text x="1628" y="689" class="n e Y">104</text><text x="1640" y="689" class="n G">S</text><text x="1679" y="689" class="n e D">13</text>
<text x="1462" y="707" class="n">14:56</text><text x="1531" y="707" class="n G">27.30</text><text x="1628" y="707" class="n e Y">19</text><text x="1640" y="707" class="n R">B</text><text x="1679" y="707" class="n e D">2</text>
<text x="1462" y="725" class="n">14:56</text><text x="1531" y="725" class="n G">27.37</text><text x="1628" y="725" class="n e Y">19</text><text x="1640" y="725" class="n R">B</text><text x="1679" y="725" class="n e D">3</text>
<text x="1462" y="743" class="n">14:56</text><text x="1531" y="743" class="n G">27.30</text><text x="1628" y="743" class="n e Y">32</text><text x="1640" y="743" class="n R">B</text><text x="1679" y="743" class="n e D">1</text>
<text x="1462" y="761" class="n">14:56</text><text x="1531" y="761" class="n G">27.31</text><text x="1628" y="761" class="n e Y">1</text><text x="1640" y="761" class="n R">B</text><text x="1679" y="761" class="n e D">1</text>
<text x="1462" y="779" class="n">14:56</text><text x="1531" y="779" class="n G">27.33</text><text x="1628" y="779" class="n e Y">5</text><text x="1640" y="779" class="n G">S</text><text x="1679" y="779" class="n e D">1</text>
<text x="1462" y="797" class="n">14:56</text><text x="1531" y="797" class="n G">27.30</text><text x="1628" y="797" class="n e Y">56</text><text x="1640" y="797" class="n G">S</text><text x="1679" y="797" class="n e D">7</text>
<text x="1462" y="815" class="n">14:56</text><text x="1531" y="815" class="n G">27.29</text><text x="1628" y="815" class="n e Y">11</text><text x="1640" y="815" class="n R">B</text><text x="1679" y="815" class="n e D">2</text>
<text x="1462" y="833" class="n">14:56</text><text x="1531" y="833" class="n G">27.29</text><text x="1628" y="833" class="n e Y">2</text><text x="1640" y="833" class="n R">B</text><text x="1679" y="833" class="n e D">1</text>
<text x="1462" y="851" class="n">14:56</text><text x="1531" y="851" class="n G">27.29</text><text x="1628" y="851" class="n e Y">22</text><text x="1640" y="851" class="n R">B</text><text x="1679" y="851" class="n e D">2</text>
<text x="1462" y="869" class="n">14:56</text><text x="1531" y="869" class="n G">27.29</text><text x="1628" y="869" class="n e Y">1</text><text x="1640" y="869" class="n R">B</text><text x="1679" y="869" class="n e D">1</text>
<text x="1462" y="887" class="n">14:56</text><text x="1531" y="887" class="n G">27.29</text><text x="1628" y="887" class="n e Y">47</text><text x="1640" y="887" class="n R">B</text><text x="1679" y="887" class="n e D">5</text>
<text x="1462" y="905" class="n">14:56</text><text x="1531" y="905" class="n G">27.30</text><text x="1628" y="905" class="n e Y">35</text><text x="1640" y="905" class="n G">S</text><text x="1679" y="905" class="n e D">2</text>
<text x="1462" y="923" class="n">14:56</text><text x="1531" y="923" class="n G">27.30</text><text x="1628" y="923" class="n e Y">7</text><text x="1640" y="923" class="n G">S</text><text x="1679" y="923" class="n e D">1</text>
<text x="1462" y="941" class="n">14:57</text><text x="1531" y="941" class="n G">27.30</text><text x="1628" y="941" class="n e Y">35</text><text x="1640" y="941" class="n G">S</text><text x="1679" y="941" class="n e D">1</text>
<text x="1462" y="959" class="n">15:00</text><text x="1531" y="959" class="n G">27.26</text><text x="1628" y="959" class="n e M">773</text><text x="1679" y="959" class="n e D">67</text>

<!-- watermark -->
<text x="1469" y="922" style="font-size:37px;font-weight:bold;fill:#fff;font-family:'Noto Sans CJK SC','WenQuanYi Zen Hei',sans-serif">财富池</text>
<text x="1585" y="908" style="font-size:15px;font-weight:bold;fill:#fff">cfchi.com</text>
<text x="1586" y="924" style="font-size:11px;font-weight:bold;fill:#fff">指标交易平台</text>
</svg>
</body></html>
